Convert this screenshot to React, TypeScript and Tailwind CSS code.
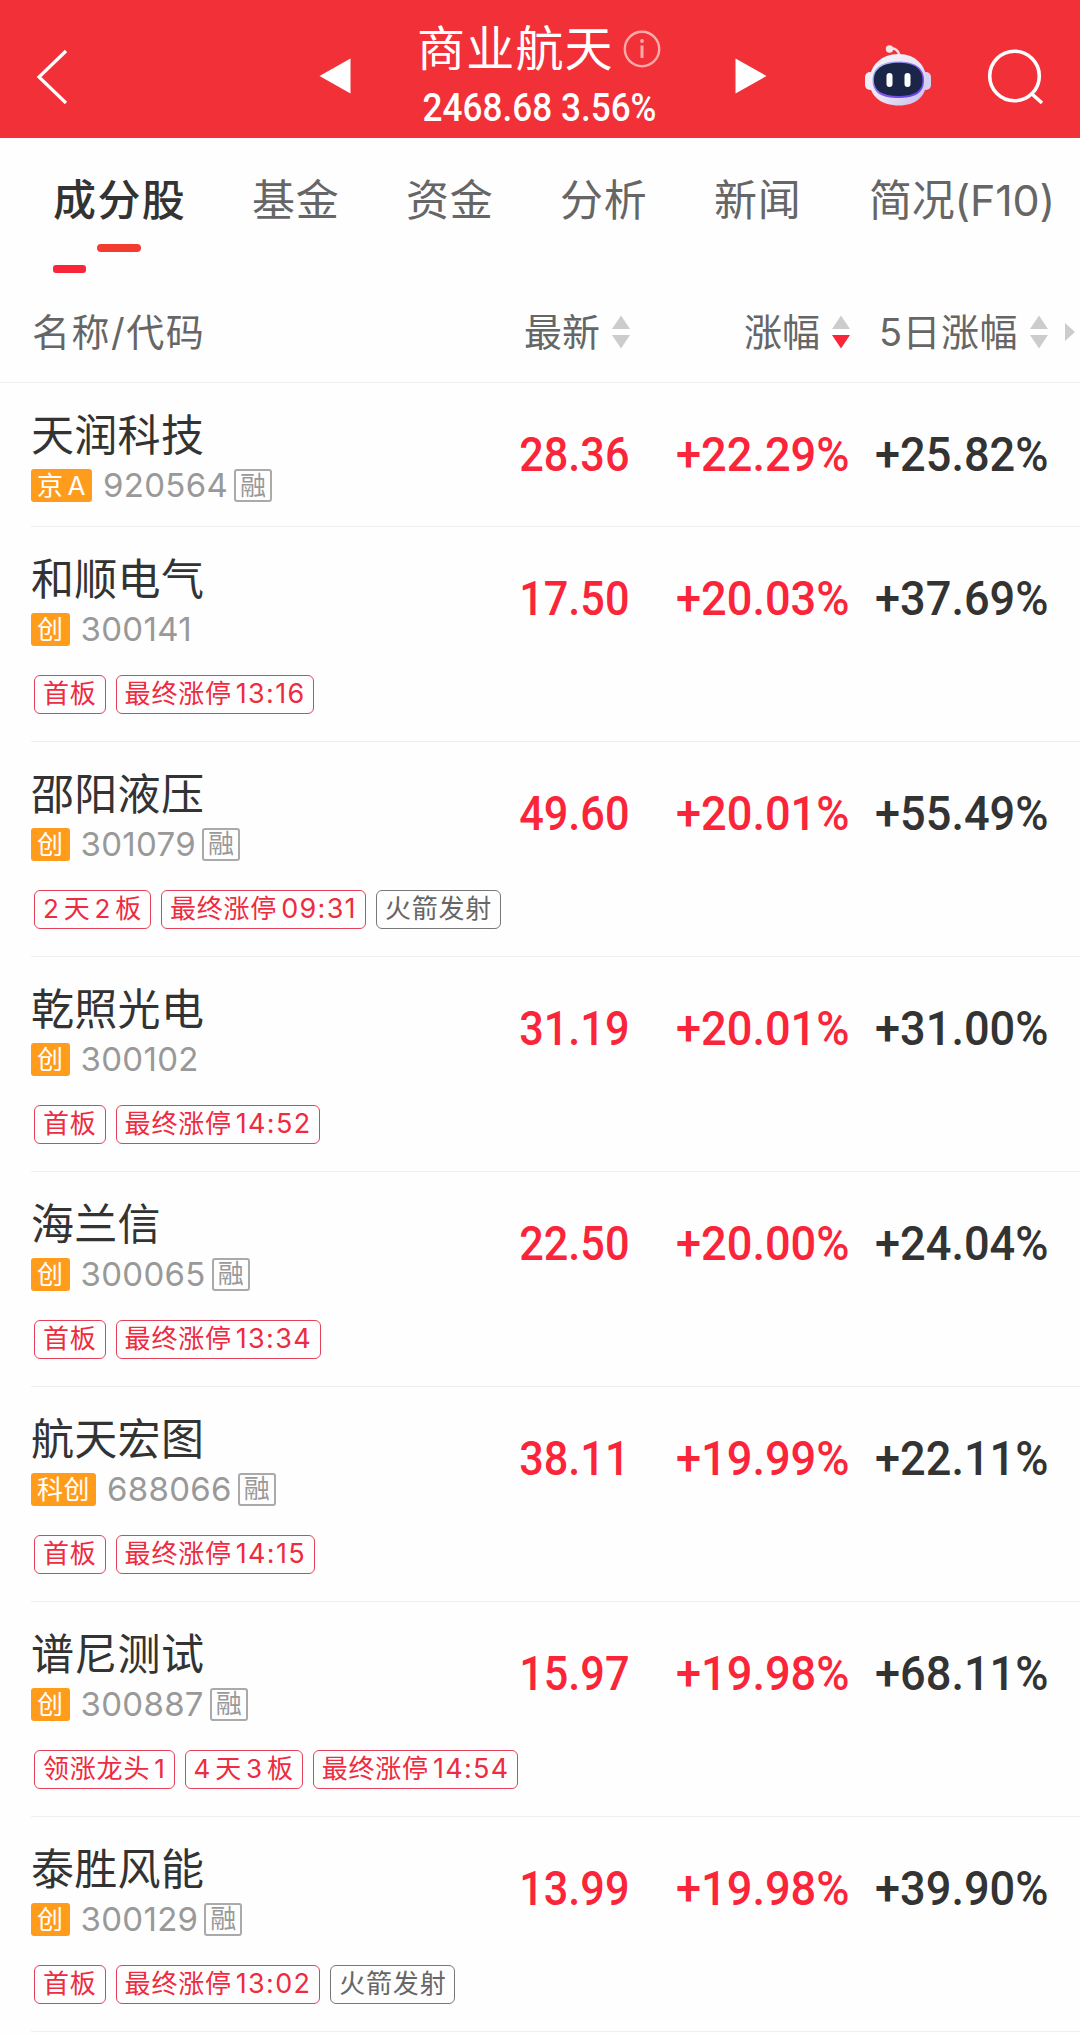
import clsx from "clsx";

type Tag = { text: string; muted?: boolean };

type Stock = {
  name: string;
  board: string;
  code: string;
  margin?: boolean;
  price: string;
  change: string;
  fiveDay: string;
  tags?: Tag[];
};

const stocks: Stock[] = [
  { name: "天润科技", board: "京A", code: "920564", margin: true, price: "28.36", change: "+22.29%", fiveDay: "+25.82%" },
  {
    name: "和顺电气", board: "创", code: "300141", price: "17.50", change: "+20.03%", fiveDay: "+37.69%",
    tags: [{ text: "首板" }, { text: "最终涨停13:16" }],
  },
  {
    name: "邵阳液压", board: "创", code: "301079", margin: true, price: "49.60", change: "+20.01%", fiveDay: "+55.49%",
    tags: [{ text: "2天2板" }, { text: "最终涨停09:31" }, { text: "火箭发射", muted: true }],
  },
  {
    name: "乾照光电", board: "创", code: "300102", price: "31.19", change: "+20.01%", fiveDay: "+31.00%",
    tags: [{ text: "首板" }, { text: "最终涨停14:52" }],
  },
  {
    name: "海兰信", board: "创", code: "300065", margin: true, price: "22.50", change: "+20.00%", fiveDay: "+24.04%",
    tags: [{ text: "首板" }, { text: "最终涨停13:34" }],
  },
  {
    name: "航天宏图", board: "科创", code: "688066", margin: true, price: "38.11", change: "+19.99%", fiveDay: "+22.11%",
    tags: [{ text: "首板" }, { text: "最终涨停14:15" }],
  },
  {
    name: "谱尼测试", board: "创", code: "300887", margin: true, price: "15.97", change: "+19.98%", fiveDay: "+68.11%",
    tags: [{ text: "领涨龙头1" }, { text: "4天3板" }, { text: "最终涨停14:54" }],
  },
  {
    name: "泰胜风能", board: "创", code: "300129", margin: true, price: "13.99", change: "+19.98%", fiveDay: "+39.90%",
    tags: [{ text: "首板" }, { text: "最终涨停13:02" }, { text: "火箭发射", muted: true }],
  },
];

const tabs = ["基金", "资金", "分析", "新闻"];

// Splits Chinese and latin runs so a small gap can sit between them
function Mixed({ text }: { text: string }) {
  const parts = text.match(/[A-Z0-9:]+|[^A-Z0-9:]+/g) ?? [];
  return (
    <span className="flex items-center gap-[4px]">
      {parts.map((part, i) => (
        <span key={i} className={part.includes(":") ? "text-[27px] tracking-[1.300px]" : undefined}>{part}</span>
      ))}
    </span>
  );
}

function SortArrows({ desc }: { desc?: boolean }) {
  return (
    <svg width="18" height="34" viewBox="0 0 18 34" className="shrink-0">
      <path d="M9 0.5 L18 14 H0 Z" fill="#cccccc" />
      <path d="M0 20 H18 L9 33.5 Z" fill={desc ? "#fa2539" : "#cccccc"} />
    </svg>
  );
}

function Robot() {
  return (
    <svg width="68" height="64" viewBox="0 0 68 64">
      <defs>
        <linearGradient id="shell" x1="0" y1="0" x2="1" y2="1">
          <stop offset="0" stopColor="#fbf6fb" />
          <stop offset="0.55" stopColor="#e9e3f6" />
          <stop offset="1" stopColor="#c4b8ee" />
        </linearGradient>
        <linearGradient id="rim" x1="0" y1="0" x2="1" y2="1">
          <stop offset="0" stopColor="#b8dcf0" />
          <stop offset="0.5" stopColor="#8a5cf0" />
          <stop offset="1" stopColor="#5a3ce0" />
        </linearGradient>
      </defs>
      <path d="M25 5 C31 3.500 34.500 6 35.500 12" fill="none" stroke="#f3dfe4" strokeWidth="2.400" />
      <circle cx="25.500" cy="5" r="3.700" fill="#f1e6ec" />
      <rect x="1" y="28" width="10" height="18" rx="5" fill="#f1ecf8" />
      <rect x="57" y="28" width="10" height="18" rx="5" fill="#d8d0f4" />
      <path d="M34.500 10 C52 10 62.500 22 62.500 37 C62.500 53 51 61.500 35 61.500 C18 61.500 5.500 53 5.500 37 C5.500 22 17 10 34.500 10 Z" fill="url(#shell)" />
      <path d="M34 17.500 C50 17.500 60 23 60 36 C60 49 51 54 34 54 C18 54 8.500 49 8.500 36 C8.500 23 18 17.500 34 17.500 Z" fill="url(#rim)" />
      <path d="M34 18.800 C49 18.800 58.500 24 58.500 36 C58.500 48 49 52 34 52 C19 52 9.800 47 9.800 36 C9.800 25 19 18.800 34 18.800 Z" fill="#1b2547" />
      <rect x="22.500" y="29" width="6" height="14" rx="3" fill="#ffffff" />
      <rect x="40.500" y="29" width="6" height="14" rx="3" fill="#ffffff" />
    </svg>
  );
}

function Header() {
  return (
    <header className="flex h-[138px] bg-[#f23038] text-white">
      <svg width="34" height="60" viewBox="0 0 34 60" className="mt-[47px] ml-[35px]" fill="none" stroke="#fff" strokeWidth="3.2">
        <path d="M31 4 L4 30 L31 56" />
      </svg>
      <svg width="32" height="36" viewBox="0 0 32 36" className="mt-[58px] ml-[250px]">
        <path d="M0.500 18 L31.500 0.500 V35.500 Z" fill="#fff" />
      </svg>
      <div className="ml-[66px] w-[244px] pt-[20px]">
        <div className="flex h-[57px] items-center">
          <h1 className="text-[48px] leading-[57px] font-normal tracking-[1.200px] whitespace-nowrap">商业航天</h1>
          <svg width="38" height="38" viewBox="0 0 38 38" className="ml-[9px] shrink-0" fill="none" stroke="#ffaaa8" strokeWidth="2.400">
            <circle cx="19" cy="19" r="17.200" />
            <path d="M19 15.500 V28" strokeWidth="3" />
            <circle cx="19" cy="11" r="1.900" fill="#ffaaa8" stroke="none" />
          </svg>
        </div>
        <div className="h-[60px] font-[Roboto,sans-serif] text-[38px] leading-[62px] font-medium whitespace-nowrap">
          <span className="inline-block origin-left scale-x-[0.925] pl-[6px]">2468.68 3.56%</span>
        </div>
      </div>
      <svg width="32" height="36" viewBox="0 0 32 36" className="mt-[58px] ml-[74px]">
        <path d="M0.500 0.500 L31.500 18 L0.500 35.500 Z" fill="#fff" />
      </svg>
      <div className="mt-[44px] ml-[97px]">
        <Robot />
      </div>
      <svg width="60" height="60" viewBox="0 0 60 60" className="mt-[47px] ml-[53px]" fill="none" stroke="#fff" strokeWidth="3.600">
        <circle cx="29.500" cy="29" r="24.800" />
        <path d="M47 47 L57 56" />
      </svg>
    </header>
  );
}

function Tabs() {
  return (
    <nav className="h-[156px] pt-[31px] text-[43px] leading-[60px] tracking-[0.800px] whitespace-nowrap text-[#666]">
      <div className="flex h-[75px] pt-px pl-[53px]">
        <div className="w-[199px] font-medium tracking-[1.400px] text-[#333]">成分股</div>
        {tabs.map((tab) => (
          <div key={tab} className="w-[154px]">{tab}</div>
        ))}
        <div className="ml-[1px] tracking-[-0.200px]">简况(F10)</div>
      </div>
      <div className="ml-[97px] h-[8px] w-[44px] rounded-full bg-[#f43b30]" />
      <div className="mt-[13px] ml-[53px] h-[8px] w-[33px] rounded-[3px] bg-[#fa2539]" />
    </nav>
  );
}

function TableHead() {
  return (
    <div className="flex h-[89px] items-center border-b border-[#eee] pb-[13px] pl-[32px] text-[38px] leading-[50px] whitespace-nowrap text-[#666]">
      <div className="flex-1 tracking-[1.500px]">名称/代码</div>
      <div className="flex w-[220px] items-center justify-end gap-[12px]">最新 <SortArrows /></div>
      <div className="flex w-[220px] items-center justify-end gap-[12px]">涨幅 <SortArrows desc /></div>
      <div className="flex w-[198px] items-center justify-end gap-[12px]">
        <span className="tracking-[0.500px]">5日涨幅</span>
        <SortArrows />
      </div>
      <svg width="10" height="18" viewBox="0 0 10 18" className="mr-[5px] ml-[17px]">
        <path d="M0 0 L10 9 L0 18 Z" fill="#cccccc" />
      </svg>
    </div>
  );
}

function Figure({ value, className, scale = "scale-x-[0.94]" }: { value: string; className: string; scale?: string }) {
  return (
    <div className={clsx("mt-[38px] flex justify-end font-[Roboto,sans-serif] text-[48px] leading-[68px] font-medium", className)}>
      <span className={clsx("inline-block origin-right", scale)}>{value}</span>
    </div>
  );
}

function StockRow({ stock }: { stock: Stock }) {
  return (
    <div className={clsx("ml-[31px] border-b border-[#eee] whitespace-nowrap", stock.tags ? "h-[215px]" : "h-[143.5px]")}>
      <div className="flex">
        <div className="flex-1 pt-[27px]">
          <div className="text-[43px] leading-[50px] tracking-[0.300px] text-[#333]">{stock.name}</div>
          <div className="mt-[9px] flex h-[33px] items-center">
            <span className="flex h-[33px] items-center rounded-[3px] bg-[#ff9c1c] px-[6px] text-[26px] leading-[33px] tracking-[0.500px] text-white">
              <Mixed text={stock.board} />
            </span>
            <span className="ml-[11px] text-[33px] leading-[33px] tracking-[0.300px] text-[#999]">{stock.code}</span>
            {stock.margin && (
              <span className="ml-[6px] flex h-[33px] w-[38px] items-center justify-center rounded-[3px] border-2 border-[#aaa] text-[26px] leading-[30px] text-[#999]">
                融
              </span>
            )}
          </div>
        </div>
        <Figure value={stock.price} className="w-[220px] text-[#fa2539]" scale="scale-x-[0.9]" />
        <Figure value={stock.change} className="w-[220px] text-[#fa2539]" />
        <Figure value={stock.fiveDay} className="mr-[32px] w-[199px] text-[#333]" />
      </div>
      {stock.tags && (
        <div className="mt-[29px] ml-[3px] flex gap-[10px]">
          {stock.tags.map((tag) => (
            <span
              key={tag.text}
              className={clsx(
                "flex h-[39px] items-center rounded-[6px] border px-[8px] text-[26px] leading-[36px] tracking-[0.800px]",
                tag.muted ? "border-[#777] text-[#666]" : "border-[#e5405a] text-[#ee2b40]"
              )}
            >
              <Mixed text={tag.text} />
            </span>
          ))}
        </div>
      )}
    </div>
  );
}

export default function App() {
  return (
    <div className="h-[2035px] w-[1080px] overflow-hidden bg-[#fefefe] font-[Inter,'Noto_Sans_CJK_SC',sans-serif]">
      <Header />
      <Tabs />
      <TableHead />
      {stocks.map((stock) => (
        <StockRow key={stock.code} stock={stock} />
      ))}
    </div>
  );
}
